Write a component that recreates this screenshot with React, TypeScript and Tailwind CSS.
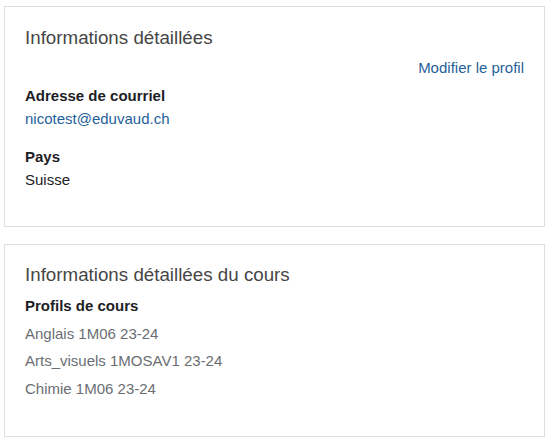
import React from "react";

export default function App() {
  const font = { fontFamily: '"Liberation Sans", Arial, sans-serif' };
  return (
    <div className="w-[556px] h-[448px] bg-white" style={font}>
      <div className="pt-[6px] pl-[4px] flex flex-col gap-[17px]">
        <section className="w-[541px] h-[221px] border border-[#dedede] bg-white px-[20px] pt-[20px]">
          <h3 className="text-[18.75px] leading-[22.5px] text-[#464646] font-normal">
            Informations détaillées
          </h3>
          <div className="mt-[7px] flex justify-end">
            <a className="text-[15px] leading-[22.5px] text-[#1f5f9a]">Modifier le profil</a>
          </div>
          <dl className="mt-[6px] text-[15px] leading-[22.5px] text-[#1d2125]">
            <dt className="font-bold">Adresse de courriel</dt>
            <dd className="text-[#1f5f9a]">nicotest@eduvaud.ch</dd>
            <dt className="font-bold mt-[16px]">Pays</dt>
            <dd>Suisse</dd>
          </dl>
        </section>
        <section className="w-[541px] h-[193px] border border-[#dedede] bg-white px-[20px] pt-[19px]">
          <h3 className="text-[18.75px] leading-[22.5px] text-[#464646] font-normal">
            Informations détaillées du cours
          </h3>
          <div className="mt-[8px] text-[15px] leading-[22.5px]">
            <div className="font-bold text-[#1d2125]">Profils de cours</div>
            <ul className="mt-[5.5px] flex flex-col gap-[5px] text-[#6a6e73]">
              <li>Anglais 1M06 23-24</li>
              <li>Arts_visuels 1MOSAV1 23-24</li>
              <li>Chimie 1M06 23-24</li>
            </ul>
          </div>
        </section>
      </div>
    </div>
  );
}
